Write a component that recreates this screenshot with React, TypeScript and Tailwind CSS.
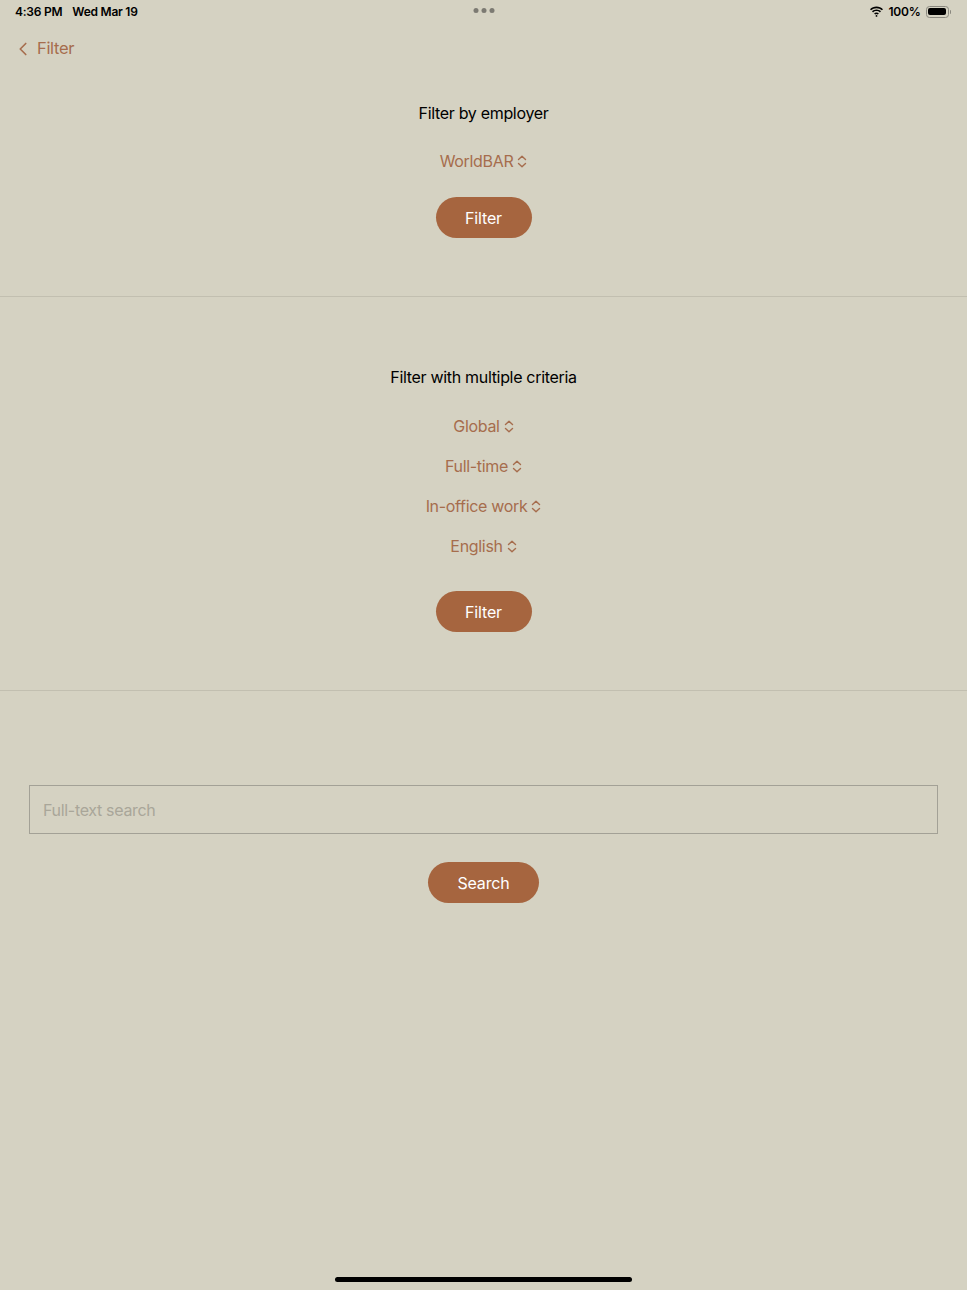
import { ChevronLeft } from 'lucide-react';

const ACCENT_TEXT = 'text-[#a66d4d]';

function UpDown() {
  return (
    <svg width="10" height="13" viewBox="0 0 10 13" fill="none" className="ml-1 inline-block">
      <path d="M1.5 4.5L5 1.2L8.5 4.5M1.5 8.5L5 11.8L8.5 8.5" stroke="#a66d4d" strokeWidth="1.4" strokeLinecap="round" strokeLinejoin="round" />
    </svg>
  );
}

function Picker({ label }: { label: string }) {
  return (
    <div className={`flex h-10 items-center justify-center text-[16px] tracking-[-0.02em] ${ACCENT_TEXT}`}>
      <span>{label}</span>
      <UpDown />
    </div>
  );
}

function PillButton({ label, width }: { label: string; width: string }) {
  return (
    <button className={`flex h-[41px] ${width} items-center justify-center rounded-full bg-[#a6653f] text-[16px] tracking-[-0.01em] text-white`}>
      {label}
    </button>
  );
}

function StatusBar() {
  return (
    <div className="relative flex h-[23px] items-center justify-between pl-[15px] pr-4 text-[12px] font-semibold tracking-[-0.02em] text-black">
      <div className="flex gap-[10px]">
        <span>4:36 PM</span>
        <span>Wed Mar 19</span>
      </div>
      <div className="absolute left-1/2 top-[8px] flex -translate-x-1/2 gap-[3px]">
        <span className="h-[5px] w-[5px] rounded-full bg-[#7c7a72]" />
        <span className="h-[5px] w-[5px] rounded-full bg-[#7c7a72]" />
        <span className="h-[5px] w-[5px] rounded-full bg-[#7c7a72]" />
      </div>
      <div className="flex items-center gap-[5px]">
        <svg width="15" height="11" viewBox="0 0 15 11">
          <path d="M7.5 2.2c2.1 0 4 .8 5.4 2.1l1.1-1.1C12.3 1.6 10 .6 7.5.6S2.7 1.6 1 3.2l1.1 1.1C3.5 3 5.4 2.2 7.5 2.2z" fill="#000" />
          <path d="M7.5 5.1c1.3 0 2.5.5 3.4 1.3l1.1-1.1C10.8 4.2 9.2 3.5 7.5 3.5S4.2 4.2 3 5.3l1.1 1.1c.9-.8 2.1-1.3 3.4-1.3z" fill="#000" />
          <path d="M7.5 8.1c.5 0 .9.2 1.3.5l1.1-1.1c-.6-.6-1.5-1-2.4-1s-1.8.4-2.4 1l1.1 1.1c.4-.3.8-.5 1.3-.5z" fill="#000" />
          <circle cx="7.5" cy="9.9" r="0.9" fill="#000" />
        </svg>
        <span>100%</span>
        <div className="flex items-center">
          <div className="flex h-[12px] w-[23px] items-center rounded-[3.5px] border border-[#8a887f] p-[1.5px]">
            <div className="h-full w-full rounded-[2px] bg-black" />
          </div>
          <div className="ml-[1px] h-[4px] w-[1.5px] rounded-r-sm bg-[#8a887f]" />
        </div>
      </div>
    </div>
  );
}

export default function App() {
  return (
    <div className="relative flex h-[1290px] w-[967px] flex-col bg-[#d5d2c2] font-['Inter','Liberation_Sans',sans-serif]">
      <StatusBar />

      <div className={`flex h-[52px] items-center pb-[1px] pl-[12px] text-[16.5px] tracking-[-0.02em] ${ACCENT_TEXT}`}>
        <ChevronLeft size={22} strokeWidth={1.8} className="mr-[3px]" />
        <span>Filter</span>
      </div>

      {/* employer filter */}
      <section className="flex flex-col items-center pt-[26px]">
        <h2 className="text-[16px] tracking-[-0.02em] text-black">Filter by employer</h2>
        <div className="mt-[16px]">
          <Picker label="WorldBAR" />
        </div>
        <div className="mt-[16px]">
          <PillButton label="Filter" width="w-[96px]" />
        </div>
      </section>

      <div className="mt-[58px] h-px bg-[#c2bfb0]" />

      {/* multi-criteria filter */}
      <section className="flex flex-col items-center pt-[68px]">
        <h2 className="text-[16px] tracking-[-0.02em] text-black">Filter with multiple criteria</h2>
        <div className="mt-[17px] flex flex-col">
          <Picker label="Global" />
          <Picker label="Full-time" />
          <Picker label="In-office work" />
          <Picker label="English" />
        </div>
        <div className="mt-[25px]">
          <PillButton label="Filter" width="w-[96px]" />
        </div>
      </section>

      <div className="mt-[58px] h-px bg-[#c2bfb0]" />

      {/* full-text search */}
      <section className="flex flex-col items-center px-[29px] pt-[94px]">
        <input
          placeholder="Full-text search"
          className="h-[49px] w-full border border-[#a3a196] bg-transparent px-[13px] text-[16px] tracking-[-0.02em] text-black outline-none placeholder:text-[#a9a699]"
        />
        <div className="mt-[28px]">
          <PillButton label="Search" width="w-[111px]" />
        </div>
      </section>

      <div className="absolute bottom-[8px] left-[335px] h-[5px] w-[297px] rounded-full bg-black" />
    </div>
  );
}
